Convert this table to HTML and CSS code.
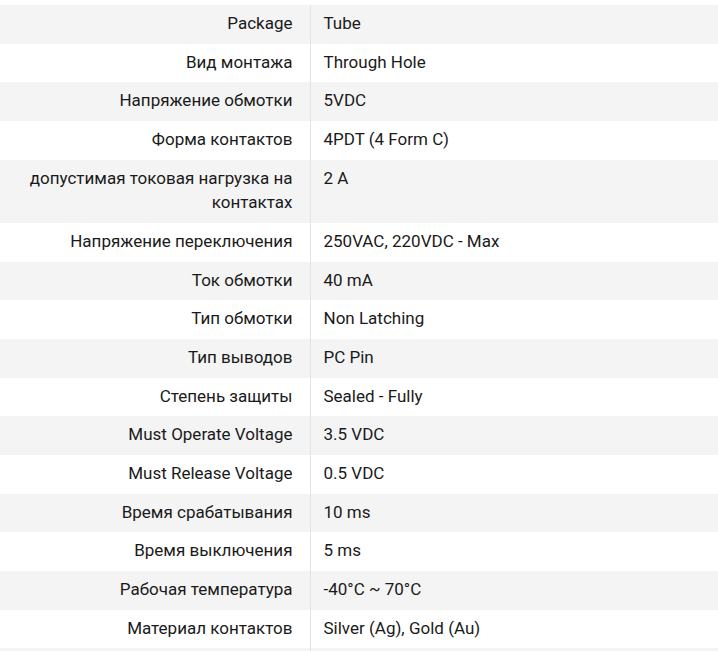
FILE: index.html
```html
<!DOCTYPE html>
<html lang="ru">
<head>
<meta charset="utf-8">
<link rel="stylesheet" href="styles.css">
</head>
<body>
<table class="specs">
<tbody>
<tr><th>Package</th><td>Tube</td></tr>
<tr><th>Вид монтажа</th><td>Through Hole</td></tr>
<tr><th>Напряжение обмотки</th><td>5VDC</td></tr>
<tr><th>Форма контактов</th><td>4PDT (4 Form C)</td></tr>
<tr><th>допустимая токовая нагрузка на контактах</th><td>2 A</td></tr>
<tr><th>Напряжение переключения</th><td>250VAC, 220VDC - Max</td></tr>
<tr><th>Ток обмотки</th><td>40 mA</td></tr>
<tr><th>Тип обмотки</th><td>Non Latching</td></tr>
<tr><th>Тип выводов</th><td>PC Pin</td></tr>
<tr><th>Степень защиты</th><td>Sealed - Fully</td></tr>
<tr><th>Must Operate Voltage</th><td>3.5 VDC</td></tr>
<tr><th>Must Release Voltage</th><td>0.5 VDC</td></tr>
<tr><th>Время срабатывания</th><td>10 ms</td></tr>
<tr><th>Время выключения</th><td>5 ms</td></tr>
<tr><th>Рабочая температура</th><td>-40°C ~ 70°C</td></tr>
<tr><th>Материал контактов</th><td>Silver (Ag), Gold (Au)</td></tr>
<tr class="cut"><th></th><td></td></tr>
</tbody>
</table>
</body>
</html>
```

FILE: styles.css
```css
html, body {
  margin: 0;
  padding: 0;
  background: #ffffff;
}
body {
  padding-top: 5px;
  font-family: Roboto, "Noto Sans", sans-serif;
  font-size: 17px;
  color: #1a1a1a;
}
.specs {
  width: 100%;
  border-collapse: collapse;
  table-layout: fixed;
}
.specs tr:nth-child(odd) {
  background: #f4f4f4;
}
.specs th,
.specs td {
  padding: 6px 0 8px;
  line-height: 24.67px;
  vertical-align: top;
  font-weight: 400;
}
.specs th {
  width: 310px;
  text-align: right;
  padding-right: 17px;
  padding-left: 16px;
  border-right: 1px solid #e3e3e3;
  box-sizing: border-box;
}
.specs td {
  text-align: left;
  padding-left: 13px;
}
.specs .cut th,
.specs .cut td {
  height: 38px;
}
```
